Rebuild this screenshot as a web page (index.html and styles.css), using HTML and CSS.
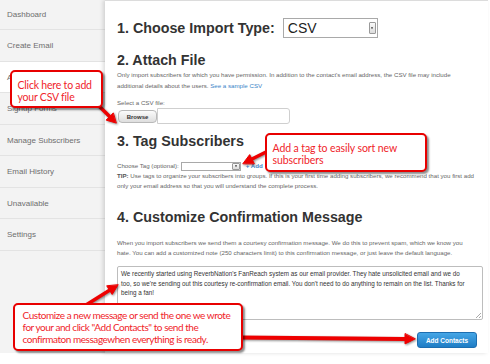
FILE: index.html
```html
<!DOCTYPE html>
<html>
<head>
<meta charset="utf-8">
<link rel="stylesheet" href="styles.css">
</head>
<body>
<div class="page">
  <nav class="side">
    <div class="item">Dashboard</div>
    <div class="item">Create Email</div>
    <div class="item active">Add Contacts</div>
    <div class="item">Signup Forms</div>
    <div class="item">Manage Subscribers</div>
    <div class="item">Email History</div>
    <div class="item">Unavailable</div>
    <div class="item">Settings</div>
  </nav>
  <main class="panel">
    <div class="row1">
      <h1 class="h">1. Choose Import Type:</h1>
      <div class="bigselect"><span>CSV</span><i class="dd big"></i></div>
    </div>
    <h2 class="h h2">2. Attach File</h2>
    <p class="small p1">Only import subscribers for which you have permission. In addition to the contact's email address, the CSV file may include<br>additional details about the users. <a class="link">See a sample CSV</a></p>
    <div class="small label">Select a CSV file:</div>
    <div class="file"><span class="browse">Browse</span><span class="ftext"></span></div>
    <h2 class="h h3">3. Tag Subscribers</h2>
    <div class="small tagrow">Choose Tag (optional):<span class="smselect"><i class="dd sm"></i></span><a class="add">+ Add</a></div>
    <p class="small tip"><b>TIP:</b> Use tags to organize your subscribers into groups. If this is your first time adding subscribers, we recommend that you first add<br>only your email address so that you will understand the complete process.</p>
    <h2 class="h h4">4. Customize Confirmation Message</h2>
    <p class="small p4">When you import subscribers we send them a courtesy confirmation message. We do this to prevent spam, which we know you<br>hate. You can add a customized note (250 characters limit) to this confirmation message, or just leave the default language.</p>
    <div class="textarea">We recently started using ReverbNation's FanReach system as our email provider. They hate unsolicited email and we do<br>too, so we're sending out this courtesy re-confirmation email. You don't need to do anything to remain on the list. Thanks for<br>being a fan!<i class="grip"></i></div>
    <div class="actions"><span class="btn">Add Contacts</span></div>
  </main>
</div>

<svg class="arrows" width="490" height="364" viewBox="0 0 490 364">
  <g fill="#ee0000" stroke="#ee0000" stroke-linecap="round">
    <line x1="99" y1="106" x2="109.6" y2="116.6" stroke-width="3.5"/>
    <polygon points="116,123 106.1,120.1 113.1,113.1" stroke-width="1"/>
    <line x1="266" y1="152" x2="252" y2="159" stroke-width="3.5"/>
    <polygon points="243,163.5 249.7,154.6 254.2,163.5" stroke-width="1"/>
    <line x1="86" y1="305" x2="109.5" y2="290.3" stroke-width="3.5"/>
    <polygon points="118,285 112.2,294.5 106.9,286.1" stroke-width="1"/>
    <line x1="240" y1="337.5" x2="405" y2="338.9" stroke-width="4"/>
    <polygon points="415,339 405,343.9 405,333.9" stroke-width="1"/>
  </g>
</svg>

<div class="callout c1">Click here to add<br>your CSV file</div>
<div class="callout c2">Add a tag to easily sort new<br>subscribers</div>
<div class="callout c3">Customize a new message or send the one we wrote<br>for your and click "Add Contacts" to send the<br>confirmaton messagewhen everything is ready.</div>
</body>
</html>
```
FILE: styles.css
```css
html, body {
  margin: 0;
  padding: 0;
}
body {
  width: 490px;
  height: 364px;
  overflow: hidden;
  background: #fff;
  font-family: "Liberation Sans", Arial, sans-serif;
  position: relative;
}
.page {
  display: flex;
  height: 353px;
}
.side {
  width: 105px;
  flex: none;
  background: #f3f3f3;
}
.item {
  box-sizing: border-box;
  height: 31.5px;
  line-height: 31px;
  padding-left: 7px;
  font-size: 8px;
  color: #6e6e6e;
  border-bottom: 1px solid #e3e3e3;
  white-space: nowrap;
}
.item:first-child {
  margin-top: -1.5px;
}
.item.active {
  background: #fff;
}
.panel {
  width: 383px;
  flex: none;
  box-sizing: border-box;
  background: #fff;
  border-top: 1px solid #dcdcdc;
  box-shadow: -2px 0 4px rgba(0,0,0,0.14);
  position: relative;
  padding: 0 5px 0 12px;
  color: #666;
}
.row1 {
  display: flex;
  align-items: center;
  margin-top: 17px;
  height: 20px;
}
.h {
  margin: 0;
  font-size: 14.3px;
  font-weight: bold;
  line-height: 16px;
  color: #333;
  white-space: nowrap;
}
.row1 .h {
  line-height: 20px;
}
.bigselect {
  margin-left: 8px;
  width: 95px;
  height: 20px;
  box-sizing: border-box;
  border: 1px solid #a9a9a9;
  display: flex;
  align-items: center;
  justify-content: space-between;
  padding: 0 1px 0 4px;
  font-size: 14px;
  color: #222;
  background: #fff;
}
.dd {
  display: block;
  box-sizing: border-box;
  border: 1px solid #9a9a9a;
  border-radius: 1px;
  background: linear-gradient(#fafafa, #dcdcdc);
  position: relative;
}
.dd::after {
  content: "";
  position: absolute;
  left: 50%;
  top: 50%;
  border-left: 1.5px solid transparent;
  border-right: 1.5px solid transparent;
  border-top: 2px solid #222;
  transform: translate(-50%, -40%);
}
.dd.big {
  width: 7px;
  height: 12px;
}
.dd.sm {
  width: 9px;
  height: 9px;
}
.h2 {
  margin-top: 14px;
}
.small {
  font-size: 6.15px;
  line-height: 10px;
  color: #666;
  white-space: nowrap;
}
.p1 {
  margin: 0.5px 0 0;
  line-height: 11px;
}
.link, .add {
  color: #3b84c8;
}
.label {
  margin-top: 7.5px;
}
.file {
  display: flex;
  height: 16px;
}
.browse {
  margin: 2px 0 0 1px;
  width: 39px;
  height: 13px;
  box-sizing: border-box;
  border: 1px solid #b9b9b9;
  border-radius: 4px;
  background: linear-gradient(#fbfbfb, #dedede);
  font-size: 6px;
  font-weight: bold;
  color: #333;
  display: flex;
  align-items: center;
  justify-content: center;
}
.ftext {
  width: 133px;
  height: 16px;
  box-sizing: border-box;
  border: 1px solid #cfcfcf;
  border-radius: 0 3px 3px 0;
  background: #fff;
}
.h3 {
  margin-top: 9px;
}
.tagrow {
  margin-top: 12px;
  height: 10px;
  display: flex;
  align-items: center;
}
.smselect {
  margin-left: 2px;
  width: 60px;
  height: 9px;
  box-sizing: border-box;
  border: 1px solid #a9a9a9;
  background: #fff;
  display: flex;
  justify-content: flex-end;
  align-items: center;
}
.smselect .dd {
  height: 7px;
  width: 8px;
}
.add {
  margin-left: 5px;
  font-weight: bold;
}
.tip {
  margin: 0;
}
.tip b {
  color: #555;
}
.h4 {
  margin-top: 18px;
}
.p4 {
  margin: 13px 0 0;
}
.textarea {
  margin-top: 8px;
  height: 54px;
  box-sizing: border-box;
  border: 1px solid #bdbdbd;
  border-radius: 2px;
  padding: 2px 3px;
  font-size: 6.3px;
  line-height: 9.7px;
  color: #333;
  white-space: nowrap;
  position: relative;
}
.grip {
  position: absolute;
  right: 1px;
  bottom: 1px;
  width: 5px;
  height: 5px;
  background: linear-gradient(135deg, transparent 45%, #aaa 45%, #aaa 55%, transparent 55%, transparent 70%, #aaa 70%, #aaa 80%, transparent 80%);
}
.actions {
  margin-top: 12px;
  display: flex;
  justify-content: flex-end;
}
.btn {
  margin-right: 6px;
  width: 60px;
  height: 16px;
  box-sizing: border-box;
  border: 1px solid #1d6eb0;
  border-radius: 3px;
  background: linear-gradient(#45a6e6, #1f7dc5);
  color: #fff;
  font-size: 6.5px;
  font-weight: bold;
  display: flex;
  align-items: center;
  justify-content: center;
}
.arrows {
  position: absolute;
  left: 0;
  top: 0;
  filter: drop-shadow(1px 1px 1px rgba(0,0,0,0.45));
}
.callout {
  position: absolute;
  box-sizing: border-box;
  background: #fff;
  border: 2.5px solid #e80000;
  border-radius: 5px;
  box-shadow: 2px 2px 2px rgba(0,0,0,0.45);
  font-family: Lato, "Open Sans", sans-serif;
  font-size: 10.5px;
  line-height: 12px;
  color: #f0242a;
  white-space: nowrap;
}
.c1 {
  left: 10px;
  top: 70px;
  width: 93px;
  height: 38px;
  padding: 6.5px 0 0 5.5px;
  letter-spacing: -0.2px;
}
.c2 {
  left: 265px;
  top: 133px;
  width: 162px;
  height: 39px;
  padding: 6.5px 0 0 5.5px;
  letter-spacing: -0.1px;
}
.c3 {
  left: 13px;
  top: 303px;
  width: 230px;
  height: 48px;
  padding: 3.5px 0 0 7.5px;
  font-size: 10px;
  letter-spacing: -0.45px;
}
```
